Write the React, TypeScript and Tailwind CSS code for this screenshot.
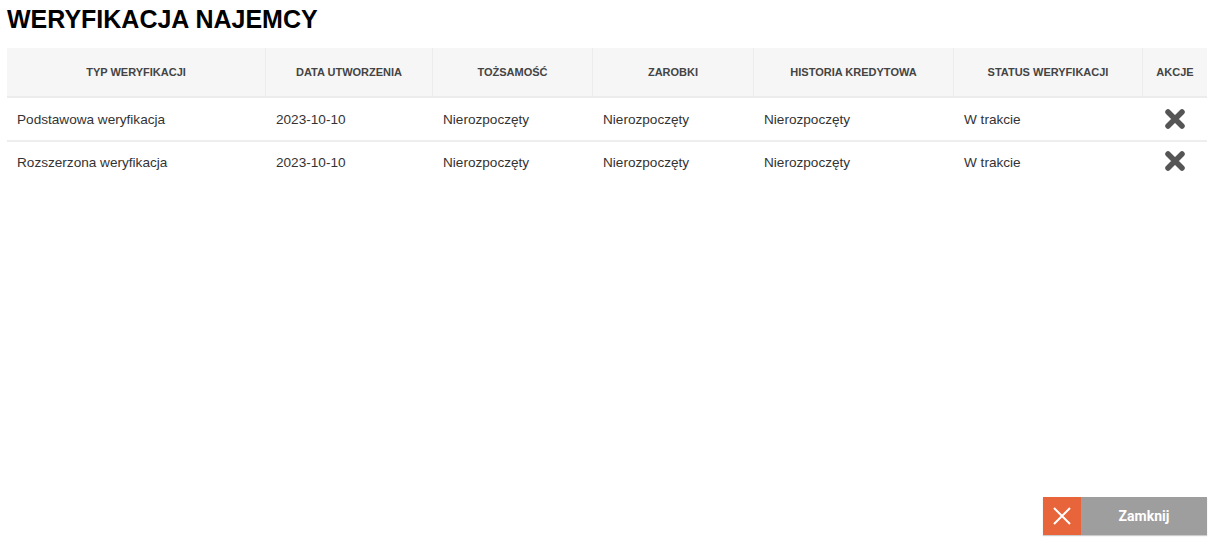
import React from "react";

const cols = [
  { label: "TYP WERYFIKACJI", w: "w-[259px]" },
  { label: "DATA UTWORZENIA", w: "w-[167px]" },
  { label: "TOŻSAMOŚĆ", w: "w-[160px]" },
  { label: "ZAROBKI", w: "w-[161px]" },
  { label: "HISTORIA KREDYTOWA", w: "w-[200px]" },
  { label: "STATUS WERYFIKACJI", w: "w-[189px]" },
  { label: "AKCJE", w: "w-[64px]" },
];

const rows = [
  ["Podstawowa weryfikacja", "2023-10-10", "Nierozpoczęty", "Nierozpoczęty", "Nierozpoczęty", "W trakcie"],
  ["Rozszerzona weryfikacja", "2023-10-10", "Nierozpoczęty", "Nierozpoczęty", "Nierozpoczęty", "W trakcie"],
];

function XIcon() {
  return (
    <svg width="24" height="22" viewBox="0 0 24 22">
      <path d="M5 4 L19 18 M19 4 L5 18" stroke="#555555" strokeWidth="5.5" strokeLinecap="round" />
    </svg>
  );
}

export default function App() {
  return (
    <div className="w-[1215px] h-[545px] bg-white flex flex-col font-['Liberation_Sans',Arial,sans-serif] text-[#333]">
      <h1 className="px-[7px] pt-[5px] text-[25px] leading-[28px] font-bold text-black">WERYFIKACJA NAJEMCY</h1>
      <div className="mx-[7px] mt-[15px] w-[1200px]">
        <div className="flex h-[50px] bg-[#f6f6f6] border-b-2 border-[#ececec]">
          {cols.map((c, i) => (
            <div
              key={c.label}
              className={`${c.w} flex items-center justify-center text-[11px] font-bold text-[#444] ${i < cols.length - 1 ? "border-r border-[#ececec]" : ""}`}
            >
              {c.label}
            </div>
          ))}
        </div>
        {rows.map((r, ri) => (
          <div
            key={ri}
            className={`flex text-[13.6px] ${ri > 0 ? "h-[43px] border-t-2 border-[#eeeeee] pt-[1px]" : "h-[42px] pt-[3px]"}`}
          >
            {r.map((cell, ci) => (
              <div key={ci} className={`${cols[ci].w} flex items-center pl-[10px]`}>
                {cell}
              </div>
            ))}
            <div className="w-[64px] flex items-center justify-center pb-[4px]">
              <XIcon />
            </div>
          </div>
        ))}
      </div>
      <div className="flex-1" />
      <div className="flex justify-end pr-[8px] pb-[10px]">
        <button className="flex h-[38px] w-[164px] shadow-[0_1px_1px_rgba(0,0,0,0.2)]">
          <span className="w-[38px] h-full bg-[#e8643a] flex items-center justify-center">
            <svg width="22" height="22" viewBox="0 0 22 22">
              <path d="M3 3 L19 19 M19 3 L3 19" stroke="white" strokeWidth="2" />
            </svg>
          </span>
          <span className="flex-1 h-full bg-[#9e9e9e] flex items-center justify-center text-white text-[14px] font-bold font-['Roboto',sans-serif]">
            Zamknij
          </span>
        </button>
      </div>
    </div>
  );
}
